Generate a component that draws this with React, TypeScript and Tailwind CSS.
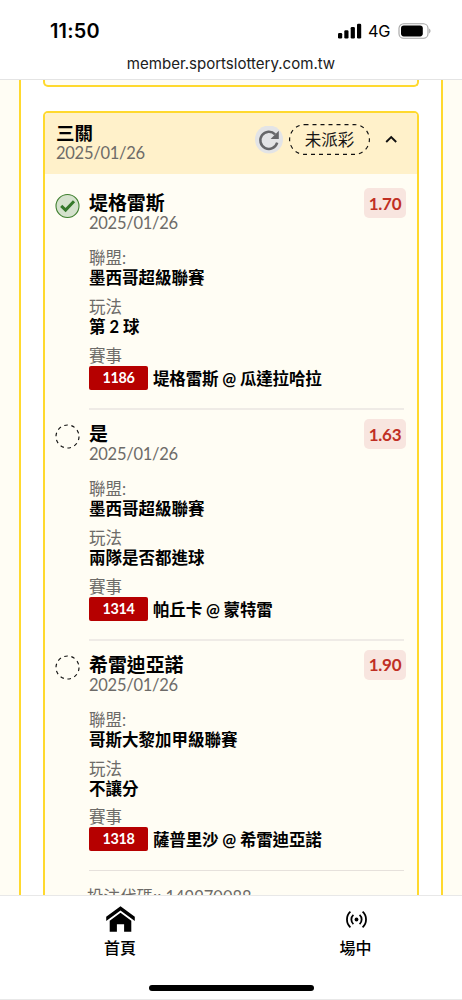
type Bet = {
  title: string;
  odds: string;
  won: boolean;
  league: string;
  play: string;
  code: string;
  match: string;
};

const bets: Bet[] = [
  { title: "堤格雷斯", odds: "1.70", won: true, league: "墨西哥超級聯賽", play: "第 2 球", code: "1186", match: "堤格雷斯 @ 瓜達拉哈拉" },
  { title: "是", odds: "1.63", won: false, league: "墨西哥超級聯賽", play: "兩隊是否都進球", code: "1314", match: "帕丘卡 @ 蒙特雷" },
  { title: "希雷迪亞諾", odds: "1.90", won: false, league: "哥斯大黎加甲級聯賽", play: "不讓分", code: "1318", match: "薩普里沙 @ 希雷迪亞諾" },
];

function StatusBar() {
  return (
    <header className="h-[80px] shrink-0 border-b border-[#e4e4e4] bg-white font-['Inter','Liberation_Sans',sans-serif]">
      <div className="flex h-[50px] items-center pt-[12px] pr-[31px] pl-[50px]">
        <span className="text-[19.9px] leading-[24px] font-semibold tracking-[0.2px] text-black">11:50</span>
        <div className="ml-auto flex items-center">
          <svg width="24" height="16" viewBox="0 0 24 16">
            <rect x="0" y="10" width="4.2" height="5.5" rx="1.2" />
            <rect x="6.3" y="7.3" width="4.2" height="8.2" rx="1.2" />
            <rect x="12.7" y="4" width="4.2" height="11.5" rx="1.2" />
            <rect x="19" y="0.8" width="4.2" height="14.7" rx="1.2" />
          </svg>
          <span className="ml-[6px] w-[24px] text-[16.3px] leading-[20px] tracking-[-0.2px] text-black">4G</span>
          <svg className="ml-[6px]" width="33" height="16" viewBox="0 0 33 16">
            <rect x="1" y="0.7" width="29" height="14.6" rx="4.6" fill="none" stroke="#a3a3a3" strokeWidth="1.1" />
            <rect x="3" y="2.6" width="21.8" height="10.8" rx="2.8" />
            <path d="M31.2 5.6c1.7.7 1.7 4.1 0 4.8z" fill="#a3a3a3" />
          </svg>
        </div>
      </div>
      <div className="pt-[4px] text-center text-[15.05px] leading-[20px] text-[#202020]">member.sportslottery.com.tw</div>
    </header>
  );
}

function StatusMark({ won }: { won: boolean }) {
  return won ? (
    <svg className="mt-[0.5px] -ml-[1.5px] shrink-0" width="26" height="26" viewBox="0 0 26 26" fill="none">
      <circle cx="12.5" cy="13" r="11.5" fill="#d5e2cd" stroke="#408030" strokeWidth="1.1" />
      <path d="M6.2 12.9l4.4 4.2 8.4-8.8" stroke="#35782a" strokeWidth="3" />
    </svg>
  ) : (
    <svg className="mt-[1px] -ml-[1.5px] shrink-0" width="26" height="26" viewBox="0 0 26 26" fill="none">
      <circle cx="12.5" cy="12.5" r="11.5" stroke="#111" strokeWidth="1.15" strokeDasharray="3.6 3.62" />
    </svg>
  );
}

function Field({ label, value }: { label: string; value: string }) {
  return (
    <div className="mb-[8.7px] text-[16.5px] leading-[20px]">
      <div className="text-[#6d6b68]">{label}</div>
      <div className="font-bold text-black">{value}</div>
    </div>
  );
}

function BetItem({ bet }: { bet: Bet }) {
  return (
    <section className="group flex h-[230.8px] pr-[11px] pl-[11px] pt-[13px]">
      <StatusMark won={bet.won} />
      <div className="ml-[8.5px] flex flex-1 flex-col">
        <div className="flex h-[56.4px] justify-between">
          <div>
            <div className="text-[18.9px] leading-[22px] font-bold text-black">{bet.title}</div>
            <div className="text-[16.5px] leading-[18px] tracking-[-0.27px] text-[#6d6b68]">2025/01/26</div>
          </div>
          <div className="-mt-[4px] flex h-[30px] w-[42px] items-center justify-center rounded-[5px] bg-[#f8e5df] pt-px text-[17px] font-bold tracking-[-0.3px] text-[#c02f24]">
            {bet.odds}
          </div>
        </div>
        <div className="mr-[2px] flex flex-1 flex-col border-b-2 border-[#efebe6] group-last-of-type:border-b group-last-of-type:border-[#e6e1dc]">
          <Field label="聯盟:" value={bet.league} />
          <Field label="玩法" value={bet.play} />
          <div className="text-[16.5px] leading-[20px]">
            <div className="text-[#6d6b68]">賽事</div>
            <div className="flex items-center">
              <span className="mr-[5px] flex h-[24px] w-[59px] items-center justify-center rounded-[2px] bg-[#b60000] text-[14.4px] font-bold tracking-[-0.3px] text-white">
                {bet.code}
              </span>
              <span className="pt-[2px] font-bold tracking-[-0.15px] whitespace-nowrap text-black">{bet.match}</span>
            </div>
          </div>
        </div>
      </div>
    </section>
  );
}

function TicketCard() {
  return (
    <article className="mt-[24px] h-[900px] shrink-0 rounded-[5px] border-2 border-[#ffd92e] bg-[#fffdf4]">
      <div className="flex h-[61px] rounded-t-[3px] bg-[#fff1ca] pt-[9px] pr-[18px] pl-[11px]">
        <div>
          <div className="text-[18.5px] leading-[22px] font-bold text-black">三關</div>
          <div className="text-[16.5px] leading-[18px] tracking-[-0.27px] text-[#6d6b68]">2025/01/26</div>
        </div>
        <div className="mt-[2px] ml-auto flex h-[31px] items-center">
          <svg width="28" height="28" viewBox="0 0 28 28" fill="none">
            <circle cx="14" cy="13.5" r="14" fill="#e3e4e6" />
            <path d="M20.1 8.3A8.6 8.6 0 1 0 22.2 16.7" stroke="#66676a" strokeWidth="2.5" />
            <path d="M23.8 4.8v8.3h-8.2z" fill="#66676a" />
          </svg>
          <div className="relative ml-[6px] flex h-[31px] w-[81px] items-center justify-center pt-[2px] text-[16.5px] text-[#161616]">
            <svg className="absolute inset-0" width="81" height="31" viewBox="0 0 81 31" fill="none">
              <rect x="0.6" y="0.6" width="79.8" height="29.8" rx="14.9" stroke="#111" strokeWidth="1.15" strokeDasharray="4 4" />
            </svg>
            未派彩
          </div>
          <svg className="ml-[14px]" width="15" height="12" viewBox="0 0 15 12" fill="none">
            <path d="M2.2 8l5-5 5 5" stroke="#111" strokeWidth="1.9" />
          </svg>
        </div>
      </div>
      <div className="pt-[5px]">
        {bets.map((bet) => (
          <BetItem key={bet.code} bet={bet} />
        ))}
        <div className="pt-[13.5px] pl-[42px] text-[16.5px] leading-[24px] text-[#6d6b68]">投注代碼:: 149970088</div>
      </div>
    </article>
  );
}

function BottomNav() {
  return (
    <nav className="flex h-[105px] shrink-0 flex-col border-t border-b border-[#e8e8e8] bg-white text-[16px] font-medium text-black">
      <div className="flex h-[89px] pl-[2px]">
        <div className="flex w-[236px] shrink-0 flex-col items-center pt-[9px]">
          <svg className="translate-x-[0.5px]" width="30" height="29" viewBox="0 0 30 29">
            <path d="M15 1.3L29.3 11.7v4.2L15 5.4.7 15.9v-4.2z" />
            <path d="M15 7.8l10.8 8v11h-7.2v-7.6h-7.2v7.6H4.2v-11z" />
          </svg>
          <span className="mt-[2px] leading-[24px]">首頁</span>
        </div>
        <div className="flex w-[235px] shrink-0 flex-col items-center pt-[9px]">
          <svg width="26" height="29" viewBox="0 0 26 29" fill="none" stroke="#000" strokeWidth="1.8">
            <circle cx="13.5" cy="14.5" r="1.9" fill="#000" stroke="none" />
            <path d="M10.4 9.9a6.2 6.2 0 0 0 0 9.2M16.6 9.9a6.2 6.2 0 0 1 0 9.2" />
            <path d="M7.4 6.7a10.6 10.6 0 0 0 0 15.6M19.6 6.7a10.6 10.6 0 0 1 0 15.6" />
          </svg>
          <span className="mt-[2px] leading-[24px]">場中</span>
        </div>
      </div>
      <div className="mx-auto h-[6px] w-[165px] rounded-full bg-black" />
    </nav>
  );
}

export default function App() {
  return (
    <div className="flex h-[1000px] w-[462px] flex-col overflow-hidden bg-white font-['Lato','Noto_Sans_CJK_TC',sans-serif]">
      <StatusBar />
      <main className="h-[815px] shrink-0 overflow-hidden bg-[#fffdf4] px-[19px]">
        <div className="flex h-full flex-col border-x-2 border-[#ffd92e] bg-white px-[22px]">
          <div className="h-[7px] shrink-0 rounded-b-[5px] border-2 border-t-0 border-[#ffd92e] bg-[#fffdf4]" />
          <TicketCard />
        </div>
      </main>
      <BottomNav />
    </div>
  );
}
